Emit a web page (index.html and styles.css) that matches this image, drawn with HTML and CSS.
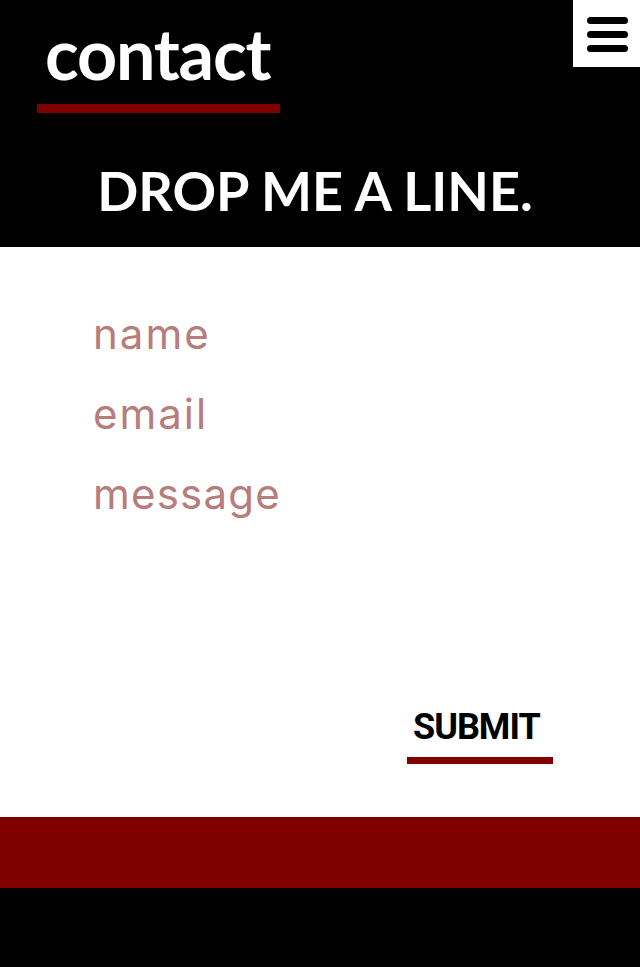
FILE: index.html
```html
<!DOCTYPE html>
<html lang="en">
<head>
<meta charset="utf-8">
<title>contact</title>
<link rel="stylesheet" href="styles.css">
</head>
<body>
<header class="top">
  <h1 class="brand">contact</h1>
  <button class="menu" aria-label="Menu">
    <span class="bar"></span><span class="bar"></span><span class="bar"></span>
  </button>
  <h2 class="tagline">DROP ME A LINE.</h2>
</header>
<main class="content">
  <form class="form">
    <input class="field" type="text" placeholder="name">
    <input class="field" type="email" placeholder="email">
    <textarea class="field message" placeholder="message"></textarea>
    <div class="actions">
      <button class="submit" type="button">SUBMIT</button>
    </div>
  </form>
</main>
<div class="band"></div>
<footer class="foot"></footer>
</body>
</html>
```
FILE: styles.css
```css
* { box-sizing: border-box; }
html, body { margin: 0; padding: 0; }
body { background: #fff; font-family: Lato, "Liberation Sans", sans-serif; }

.top {
  position: relative;
  background: #000;
  height: 247px;
  display: flex;
  flex-direction: column;
  align-items: flex-start;
}
.brand {
  margin: 18px 0 0 37px;
  padding: 0 10px 16px 8px;
  width: 243px;
  font-family: Lato, sans-serif;
  font-weight: 700;
  font-size: 70px;
  line-height: 70px;
  letter-spacing: -1.2px;
  color: #fff;
  border-bottom: 9px solid #800000;
}
.menu {
  position: absolute;
  top: 0;
  right: 0;
  width: 67px;
  height: 67px;
  background: #fff;
  border: 0;
  padding: 17px 0 0 14px;
  display: flex;
  flex-direction: column;
  gap: 7px;
  cursor: pointer;
}
.bar {
  display: block;
  width: 41px;
  height: 7px;
  background: #000;
  border-radius: 4px;
}
.tagline {
  align-self: stretch;
  margin: 51px 0 0;
  text-align: center;
  font-family: Lato, sans-serif;
  font-weight: 700;
  font-size: 54px;
  line-height: 54px;
  color: #fff;
  padding-right: 10px;
}

.content {
  height: 570px;
  padding: 62px 0 0 93px;
}
.form {
  display: flex;
  flex-direction: column;
}
.field {
  border: 0;
  outline: none;
  padding: 0;
  margin: 0 0 30px;
  width: 400px;
  height: 50px;
  font-family: Inter, sans-serif;
  font-size: 42px;
  line-height: 50px;
  letter-spacing: 2px;
  color: #333;
  background: transparent;
  resize: none;
}
.field::placeholder { color: #b77c7c; opacity: 1; }
.message { height: 150px; overflow: hidden; margin-bottom: 0; letter-spacing: 1.2px; }
.actions {
  display: flex;
  justify-content: flex-end;
  padding-right: 87px;
  margin-top: 90px;
}
.submit {
  width: 146px;
  padding: 0 0 12px 6px;
  border: 0;
  border-bottom: 7px solid #800000;
  background: transparent;
  text-align: left;
  font-family: Roboto, sans-serif;
  font-weight: 700;
  font-size: 36px;
  line-height: 36px;
  letter-spacing: -1px;
  color: #000;
  cursor: pointer;
}

.band { height: 71px; background: #800000; }
.foot { height: 79px; background: #000; }
```
